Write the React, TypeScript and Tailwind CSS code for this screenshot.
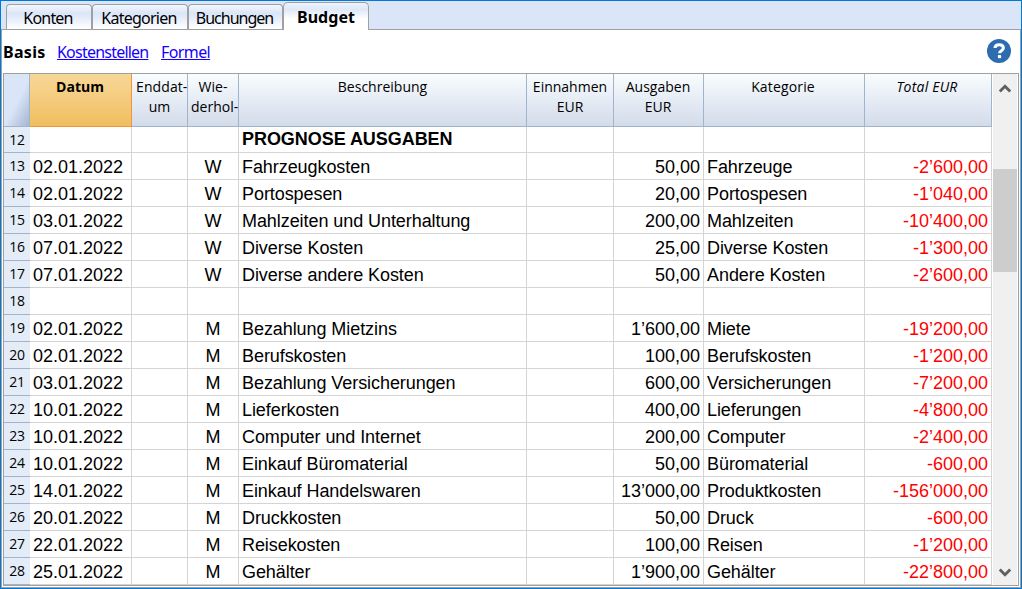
import React from 'react';

type Row = [number, string, string, string, string, string, string];

const rows: Row[] = [
  [13, '02.01.2022', 'W', 'Fahrzeugkosten', '50,00', 'Fahrzeuge', '-2’600,00'],
  [14, '02.01.2022', 'W', 'Portospesen', '20,00', 'Portospesen', '-1’040,00'],
  [15, '03.01.2022', 'W', 'Mahlzeiten und Unterhaltung', '200,00', 'Mahlzeiten', '-10’400,00'],
  [16, '07.01.2022', 'W', 'Diverse Kosten', '25,00', 'Diverse Kosten', '-1’300,00'],
  [17, '07.01.2022', 'W', 'Diverse andere Kosten', '50,00', 'Andere Kosten', '-2’600,00'],
  [18, '', '', '', '', '', ''],
  [19, '02.01.2022', 'M', 'Bezahlung Mietzins', '1’600,00', 'Miete', '-19’200,00'],
  [20, '02.01.2022', 'M', 'Berufskosten', '100,00', 'Berufskosten', '-1’200,00'],
  [21, '03.01.2022', 'M', 'Bezahlung Versicherungen', '600,00', 'Versicherungen', '-7’200,00'],
  [22, '10.01.2022', 'M', 'Lieferkosten', '400,00', 'Lieferungen', '-4’800,00'],
  [23, '10.01.2022', 'M', 'Computer und Internet', '200,00', 'Computer', '-2’400,00'],
  [24, '10.01.2022', 'M', 'Einkauf Büromaterial', '50,00', 'Büromaterial', '-600,00'],
  [25, '14.01.2022', 'M', 'Einkauf Handelswaren', '13’000,00', 'Produktkosten', '-156’000,00'],
  [26, '20.01.2022', 'M', 'Druckkosten', '50,00', 'Druck', '-600,00'],
  [27, '22.01.2022', 'M', 'Reisekosten', '100,00', 'Reisen', '-1’200,00'],
  [28, '25.01.2022', 'M', 'Gehälter', '1’900,00', 'Gehälter', '-22’800,00'],
];

const GRID = 'grid grid-rows-[100%] grid-cols-[26px_102px_56px_51px_288px_87px_90px_161px_127px]';
const CELL = 'border-r border-b border-[#d4d4d4] overflow-hidden whitespace-nowrap';
const HEAD =
  'border-r border-b border-[#a0b4cd] bg-linear-to-b from-[#f9fdff] to-[#d3dbea] text-center whitespace-nowrap pt-[3px]';
const TAB =
  'h-[25px] rounded-t-[4px] border border-b-0 border-[#a0a0a0] bg-linear-to-b from-[#f4f8fe] from-0% via-[#dae5f8] via-35% to-white pr-[2px] text-center text-[16px] leading-[26px] whitespace-nowrap';

function Num({ n }: { n: number }) {
  return (
    <div className="border-b border-[#a0b4cd] bg-[#e4ecf7] pr-[5px] text-right font-['Open_Sans',sans-serif] text-[14px] leading-[26px] tracking-[-0.1px]">
      {n}
    </div>
  );
}

export default function App() {
  return (
    <div className="flex h-[589px] w-[1022px] flex-col overflow-hidden border border-[#0078d7] bg-white font-['Noto_Sans',sans-serif] text-black">
      <div className="flex h-[29px] shrink-0 items-end bg-[#dae5f8]">
        <div className="flex h-full flex-1 items-end border-b border-[#a0a0a0] pl-[5px]">
          <div className={`${TAB} w-[86px]`}><span className="tracking-[-0.8px]">Konten</span></div>
          <div className={`${TAB} w-[96px]`}><span className="tracking-[-0.75px]">Kategorien</span></div>
          <div className={`${TAB} w-[95px]`}><span className="tracking-[-1px]">Buchungen</span></div>
          <div className="-mb-px h-[28px] w-[86px] rounded-t-[5px] border border-b-0 border-[#a0a0a0] bg-linear-to-b from-[#eef3fc] via-[#dfe8f9] via-25% to-white to-60% text-center text-[16px] leading-[29px] font-bold">
            <span className="tracking-[0.05px]">Budget</span>
          </div>
        </div>
      </div>
      <div className="flex min-h-0 flex-1 flex-col border-x border-b border-[#a0a0a0] px-px pb-px">
        <div className="flex h-[43px] shrink-0 items-center text-[16px]">
          <span className="w-[54px] font-bold tracking-[0.3px]">Basis</span>
          <a className="w-[104px] text-[#1400ff] underline"><span className="tracking-[-0.78px]">Kostenstellen</span></a>
          <a className="flex-1 text-[#1400ff] underline"><span className="tracking-[-0.6px]">Formel</span></a>
          <svg className="mr-[8px] mb-[2px]" width="24" height="24" viewBox="0 0 24 24">
            <circle cx="12" cy="12" r="12" fill="#2d6cae" />
            <path d="M8 9C8 6.7 9.7 5.7 12.2 5.7s4.2 1.3 4.2 3.4c0 2.7-3.9 2.5-3.9 5.2" fill="none" stroke="#fff" strokeWidth="3" />
            <rect x="10.9" y="16" width="3.2" height="3.2" rx="0.8" fill="#fff" />
          </svg>
        </div>
        <div className="flex h-[513px] shrink-0 border border-[#a0a0a0]">
          <div className="w-[988px] shrink-0">
            <div className={`${GRID} h-[53px] font-['Open_Sans',sans-serif] text-[14px] leading-[20px]`}>
              <div className="border-r border-b border-[#a0b4cd] bg-[linear-gradient(118deg,#dae5f8_52%,#a5b7d1_100%)]" />
              <div className="border-r border-b border-[#ed9738] bg-linear-to-b from-[#f7d897] to-[#f1be5f] pt-[3px] pr-px text-center font-bold">Datum</div>
              <div className={`${HEAD} relative z-10`}><span className="ml-[4px] tracking-[0.1px]">Enddat-</span><br />um</div>
              <div className={`${HEAD} relative z-10`}>Wie-<br /><span className="ml-[3px]">derhol-</span></div>
              <div className={HEAD}>Beschreibung</div>
              <div className={HEAD}>Einnahmen<br />EUR</div>
              <div className={`${HEAD} pr-px`}>Ausgaben<br />EUR</div>
              <div className={`${HEAD} pr-[2px] tracking-[0.15px]`}>Kategorie</div>
              <div className={`${HEAD} pr-[2px] tracking-[0.2px] italic`}>Total EUR</div>
            </div>
            <div className={`${GRID} h-[26px] font-['Liberation_Sans',sans-serif] text-[18px] leading-[24px]`}>
              <Num n={12} />
              <div className={CELL} />
              <div className={CELL} />
              <div className={CELL} />
              <div className={`${CELL} pl-[3px] font-bold tracking-[-0.05px]`}>PROGNOSE AUSGABEN</div>
              <div className={CELL} />
              <div className={CELL} />
              <div className={CELL} />
              <div className={CELL} />
            </div>
            {rows.map(([n, date, rep, desc, out, cat, total]) => (
              <div key={n} className={`${GRID} h-[27px] font-['Liberation_Sans',sans-serif] text-[18px] leading-[29px]`}>
                <Num n={n} />
                <div className={`${CELL} pl-[3px]`}>{date}</div>
                <div className={CELL} />
                <div className={`${CELL} text-center`}>{rep}</div>
                <div className={`${CELL} pl-[3px] tracking-[-0.07px]`}>{desc}</div>
                <div className={CELL} />
                <div className={`${CELL} pr-[3px] text-right`}>{out}</div>
                <div className={`${CELL} pl-[3px] tracking-[-0.07px]`}>{cat}</div>
                <div className={`${CELL} pr-[3px] text-right text-[#ff0000]`}>{total}</div>
              </div>
            ))}
          </div>
          <div className="ml-px flex w-[24px] flex-col items-center bg-[#f0f0f0]">
            <svg className="mt-[10px] h-[9px] w-[12px] shrink-0" viewBox="0 0 12 9">
              <path d="M0.8 7.5L6 2.2l5.2 5.3" fill="none" stroke="#606060" strokeWidth="2.8" />
            </svg>
            <div className="mt-[76px] h-[103px] w-full shrink-0 bg-[#cdcdcd]" />
            <div className="flex-1" />
            <svg className="mb-[8px] h-[9px] w-[12px] shrink-0" viewBox="0 0 12 9">
              <path d="M0.8 1.5L6 6.8l5.2-5.3" fill="none" stroke="#606060" strokeWidth="2.8" />
            </svg>
          </div>
        </div>
      </div>
    </div>
  );
}
